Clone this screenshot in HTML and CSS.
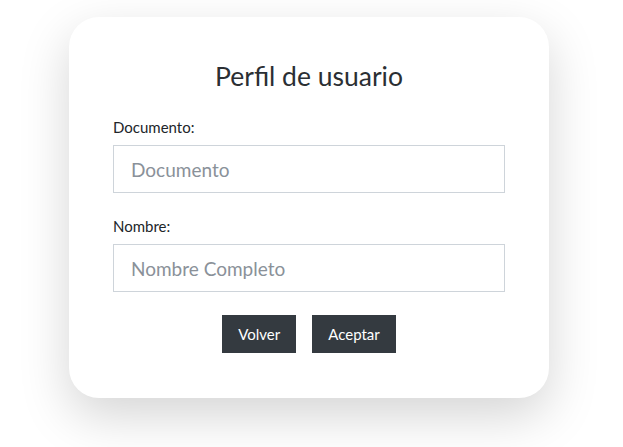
FILE: index.html
```html
<!DOCTYPE html>
<html lang="es">
<head>
<meta charset="utf-8">
<link rel="stylesheet" href="styles.css">
</head>
<body>
<div class="page">
  <form class="card">
    <h1 class="title">Perfil de usuario</h1>
    <div class="field">
      <label class="label">Documento:</label>
      <input class="input" type="text" placeholder="Documento">
    </div>
    <div class="field">
      <label class="label">Nombre:</label>
      <input class="input" type="text" placeholder="Nombre Completo">
    </div>
    <div class="actions">
      <button type="button" class="btn">Volver</button>
      <button type="button" class="btn">Aceptar</button>
    </div>
  </form>
</div>
</body>
</html>
```

FILE: styles.css
```css
html, body {
  margin: 0;
  padding: 0;
  background: #ffffff;
  font-family: Lato, "Open Sans", sans-serif;
  color: #212529;
}
.page {
  min-height: 447px;
  box-sizing: border-box;
  padding-top: 17px;
  padding-left: 69px;
}
.card {
  width: 480px;
  height: 381px;
  box-sizing: border-box;
  background: #fff;
  border-radius: 30px;
  box-shadow: 0 18px 50px rgba(0,0,0,0.17);
  padding: 42px 44px 0;
}
.title {
  margin: 0 0 26px;
  text-align: center;
  font-weight: 400;
  font-size: 26.5px;
  line-height: 34px;
  color: #2b2f33;
}
.field {
  display: flex;
  flex-direction: column;
  margin-bottom: 23px;
}
.title + .field {
  margin-top: -2px;
}
.label {
  font-size: 15px;
  line-height: 20px;
  margin-bottom: 8px;
  color: #212529;
}
.input {
  box-sizing: border-box;
  width: 392px;
  height: 48px;
  border: 1px solid #ced4da;
  border-radius: 0;
  padding: 0 17px;
  font-family: inherit;
  font-size: 19px;
  color: #495057;
  outline: none;
}
.input::placeholder {
  color: #8a9199;
}
.actions {
  display: flex;
  justify-content: center;
  gap: 16px;
  margin-top: 2px;
}
.btn {
  height: 38px;
  padding: 0 16px;
  border: none;
  border-radius: 0;
  background: #343a40;
  color: #fff;
  font-family: inherit;
  font-size: 15px;
}
```
